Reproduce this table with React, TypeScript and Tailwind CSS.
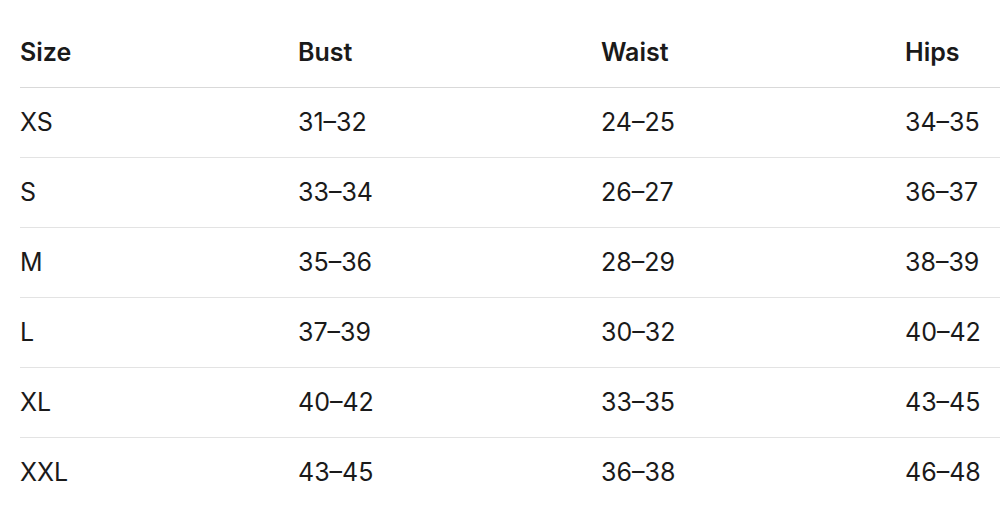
const rows = [
  ["XS", "31–32", "24–25", "34–35"],
  ["S", "33–34", "26–27", "36–37"],
  ["M", "35–36", "28–29", "38–39"],
  ["L", "37–39", "30–32", "40–42"],
  ["XL", "40–42", "33–35", "43–45"],
  ["XXL", "43–45", "36–38", "46–48"],
];

export default function App() {
  return (
    <div className="w-[1000px] h-[530px] bg-white pt-[18px] pl-5 text-[#1a1a1a] font-['Inter',sans-serif] text-[25px] overflow-hidden">
      <div className="grid grid-cols-[278px_303px_304px_1fr] h-[70px] items-center border-b border-[#d9d9d9] font-semibold">
        <div>Size</div>
        <div>Bust</div>
        <div>Waist</div>
        <div>Hips</div>
      </div>
      {rows.map((r, i) => (
        <div
          key={r[0]}
          className={
            "grid grid-cols-[278px_303px_304px_1fr] h-[70px] items-center " +
            (i < rows.length - 1 ? "border-b border-[#e3e3e3]" : "")
          }
        >
          {r.map((c, j) => (
            <div key={j}>{c}</div>
          ))}
        </div>
      ))}
    </div>
  );
}
